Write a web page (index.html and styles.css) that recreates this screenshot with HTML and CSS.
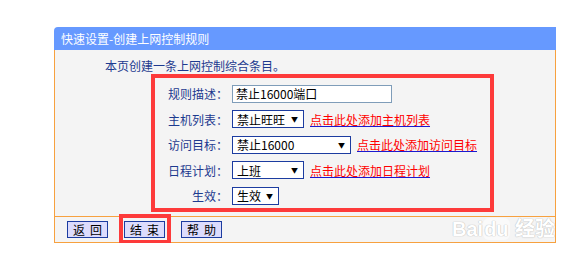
FILE: index.html
```html
<!DOCTYPE html>
<html lang="zh-CN">
<head>
    <meta charset="UTF-8">
    <meta name="viewport" content="width=device-width, initial-scale=1.0">
    <title>快速设置-创建上网控制规则</title>
    <link rel="stylesheet" href="styles.css">
</head>
<body>

<div class="page">
    <div class="panel">
        <div class="panel-title">快速设置-创建上网控制规则</div>

        <div class="panel-body">
            <p class="intro">本页创建一条上网控制综合条目。</p>

            <div class="rule-box">
                <div class="row">
                    <span class="label">规则描述：</span>
                    <input class="text-input" type="text" value="禁止16000端口">
                </div>
                <div class="row">
                    <span class="label">主机列表：</span>
                    <div class="select w72"><span>禁止旺旺</span><span class="arrow">▼</span></div>
                    <a class="add-link" href="#">点击此处添加主机列表</a>
                </div>
                <div class="row">
                    <span class="label">访问目标：</span>
                    <div class="select w119"><span>禁止16000</span><span class="arrow">▼</span></div>
                    <a class="add-link" href="#">点击此处添加访问目标</a>
                </div>
                <div class="row">
                    <span class="label">日程计划：</span>
                    <div class="select w72"><span>上班</span><span class="arrow">▼</span></div>
                    <a class="add-link" href="#">点击此处添加日程计划</a>
                </div>
                <div class="row">
                    <span class="label">生效：</span>
                    <div class="select w47"><span>生效</span><span class="arrow">▼</span></div>
                </div>
            </div>
        </div>

        <div class="panel-foot">
            <button class="btn">返回</button>
            <span class="marked"><button class="btn">结束</button></span>
            <button class="btn">帮助</button>
        </div>
    </div>

    <div class="watermark">
        <div class="wm-logo">Bai<span class="wm-du">du</span> 经验</div>
        <div class="wm-url">jingyan.baidu.com</div>
    </div>
</div>

</body>
</html>
```

FILE: styles.css
```css
body {
    margin: 0;
    background-color: #fff;
    font-family: "Noto Sans CJK SC", "DejaVu Sans", sans-serif;
    font-size: 12px;
}
.page {
    position: relative;
    padding: 27px 0 0 54px;
}
.panel {
    width: 502px;
}
.panel-title {
    height: 23px;
    line-height: 23px;
    padding-left: 7px;
    background-color: #6699ff;
    color: #fff;
    border-top-left-radius: 4px;
}
.panel-body {
    background-color: #f4f4f4;
    border-left: 1px solid #f7a13f;
    border-right: 1px solid #f7a13f;
    padding: 9px 0 4px 0;
}
.intro {
    margin: 0 0 2px 50px;
    line-height: 13px;
    color: #1d3a8f;
}
.rule-box {
    margin-left: 96px;
    width: 343px;
    height: 138px;
    box-sizing: border-box;
    border: 4px solid #fd3a3a;
    padding-top: 3px;
}
.row {
    display: flex;
    align-items: center;
    height: 25.5px;
}
.label {
    width: 73px;
    margin-right: 4px;
    text-align: right;
    color: #1d3a8f;
}
.text-input {
    width: 160px;
    height: 18px;
    box-sizing: border-box;
    padding: 0 3px;
    border: 1px solid #7f9db9;
    font-family: inherit;
    font-size: 12px;
    color: #000;
    background: #fff;
    outline: none;
}
.select {
    display: flex;
    justify-content: space-between;
    align-items: center;
    height: 18px;
    box-sizing: border-box;
    padding: 0 5px 0 4px;
    border: 1px solid #1c3ca0;
    background: #fff;
    color: #000;
}
.select .arrow {
    font-size: 7px;
    margin-left: 4px;
}
.w47 { width: 47px; }
.w72 { width: 72px; }
.w119 { width: 119px; }
.add-link {
    margin-left: 6px;
    color: #ff0000;
    text-decoration: underline;
    text-decoration-color: #1a1ad0;
}
.panel-foot {
    display: flex;
    gap: 16px;
    padding: 4px 0 4px 12px;
    background-color: #f4f4f4;
    border: 1px solid #f7a13f;
}
.btn {
    width: 41px;
    height: 17px;
    padding: 0 0 0 5px;
    border: 1px solid #1c3ca0;
    background-color: #dcdcfd;
    font-family: inherit;
    font-size: 12px;
    line-height: 15px;
    letter-spacing: 5px;
    color: #000;
}
.marked {
    position: relative;
    display: flex;
}
.marked::after {
    content: "";
    position: absolute;
    left: -5px;
    right: -6px;
    top: -7px;
    bottom: -6px;
    border: 4px solid #fd3a3a;
}
.watermark {
    position: absolute;
    left: 452px;
    top: 218px;
    color: #fff;
    text-shadow: 0 0 1px #bbb, 0 0 1px #bbb;
    font-family: "Liberation Sans", "Noto Sans CJK SC", sans-serif;
}
.wm-logo {
    font-size: 20px;
    font-weight: bold;
    line-height: 22px;
}
.wm-du {
    display: inline-block;
    padding: 0 1px;
    border-radius: 6px;
    background: rgba(255, 255, 255, 0.5);
}
.wm-url {
    font-size: 12px;
    line-height: 16px;
    margin-left: -3px;
}
```
